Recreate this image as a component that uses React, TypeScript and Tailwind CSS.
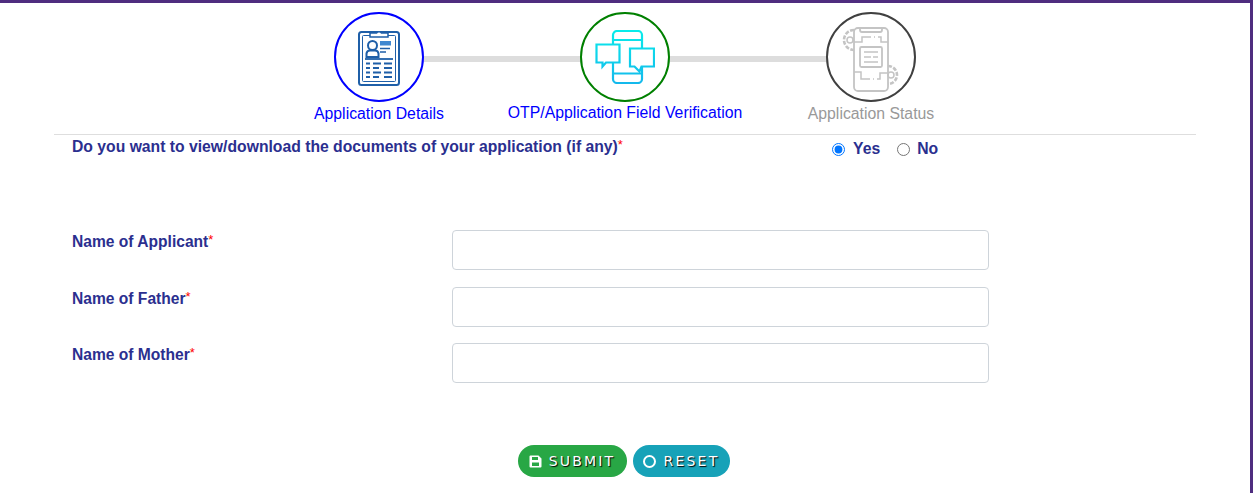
import React from "react";

function ClipboardIcon() {
  return (
    <svg width="42" height="58" viewBox="0 0 42 58" fill="none" stroke="#1f5fa8" strokeWidth="1.5" className="ml-[1px]">
      <rect x="1" y="4" width="40" height="53" rx="2.5" strokeWidth="2" />
      <rect x="4.500" y="7.500" width="33" height="46" rx="1" strokeWidth="1" />
      <path d="M12 9V5h6.500a3 3 0 0 1 5 0H30v4z" fill="#fff" strokeWidth="1.500" />
      <circle cx="14.500" cy="17.500" r="4.500" strokeWidth="2" />
      <path d="M8.500 29v-3.500a3.500 3.500 0 0 1 3.500-3h5a3.500 3.500 0 0 1 3.500 3V29z" strokeWidth="2" />
      <rect x="22" y="13" width="11" height="4.500" fill="#3f87d0" stroke="none" />
      <path d="M22 20.500h10M22 24h6" strokeWidth="1.500" />
      <path d="M7 31h28" strokeWidth="1.800" />
      <path d="M8 35.500h4M15 35.500h8M26 35.500h8M8 40h4M15 40h6M26 40h8M8 44.500h4M15 44.500h8M26 44.500h8M8 49h4M15 49h6M26 49h8" strokeWidth="2" />
    </svg>
  );
}

function ChatPhoneIcon() {
  return (
    <svg width="60" height="54" viewBox="0 0 60 54" fill="none" strokeWidth="2.200">
      <defs>
        <linearGradient id="chatgrad" gradientUnits="userSpaceOnUse" x1="0" y1="0" x2="0" y2="54">
          <stop offset="0" stopColor="#08ecea" />
          <stop offset="1" stopColor="#14b8ec" />
        </linearGradient>
      </defs>
      <g stroke="url(#chatgrad)">
        <rect x="18" y="1" width="29" height="52" rx="4" />
        <path d="M18 10h29M18 43.500h29" strokeWidth="1.800" />
        <path d="M1.500 14.500h23v18H11l-3.500 4v-4h-6z" fill="#fff" />
        <path d="M35 18.500h24v18H46.500l-2 5-5-5H35z" fill="#fff" />
      </g>
    </svg>
  );
}

function GearPhoneIcon() {
  return (
    <svg width="60" height="72" viewBox="0 0 60 72" fill="none" stroke="#c4c4c4" strokeWidth="1.800">
      <path d="M13 9 a8.500 8.500 0 1 0 0 20" strokeDasharray="4 1.500" strokeWidth="2.600" />
      <circle cx="9" cy="19" r="3" strokeWidth="1.500" />
      <rect x="13" y="7" width="34" height="63" rx="4" />
      <path d="M19 7v2a2 2 0 0 0 2 2h18a2 2 0 0 0 2-2V7" />
      <path d="M13 21h8v-5h9M33 16h1M37 16h3v5h7" strokeWidth="1.500" />
      <rect x="19" y="26" width="22" height="20" rx="1.500" fill="#fff" />
      <path d="M23 31h14M23 36h7M32 36h5M23 41h14" strokeWidth="1.600" />
      <path d="M13 51h7v7h9M32 58h1M36 58h3v-6h8" strokeWidth="1.500" />
      <path d="M47 45a9 9 0 1 1 0 18" strokeDasharray="4 1.500" strokeWidth="2.600" />
      <circle cx="50" cy="54" r="3" strokeWidth="1.500" />
    </svg>
  );
}

function Req() {
  return <span className="align-[3px] text-[13px] font-normal leading-none text-[#ff0000]">*</span>;
}

function Field({ label }: { label: string }) {
  return (
    <div className="flex h-10 items-start">
      <label className="w-[380px] pt-[3px] text-[15.600px] font-bold leading-[18px] text-[#2b2f8f]">
        {label}
        <Req />
      </label>
      <input
        type="text"
        className="h-10 w-[537px] rounded-[4px] border border-[#ced4da] bg-white"
      />
    </div>
  );
}

export default function App() {
  return (
    <div
      className="h-[493px] overflow-hidden border-t-[3px] border-r-[3px] border-[#4f2d7f] bg-white"
      style={{ fontFamily: '"Liberation Sans", Arial, sans-serif' }}
    >
      <div className="flex justify-center pt-[9px] pr-[3px] pl-[8px]">
        <div className="ml-[-6px] flex items-center">
          <div className="flex h-[90px] w-[90px] items-center justify-center rounded-full border-2 border-[#0000ff]">
            <ClipboardIcon />
          </div>
          <div className="mt-[4px] h-[6px] w-[156px] bg-[#dddddd]" />
          <div className="flex h-[90px] w-[90px] items-center justify-center rounded-full border-2 border-[#008000]">
            <ChatPhoneIcon />
          </div>
          <div className="mt-[4px] h-[6px] w-[156px] bg-[#dddddd]" />
          <div className="flex h-[90px] w-[90px] items-center justify-center rounded-full border-2 border-[#404040]">
            <GearPhoneIcon />
          </div>
        </div>
      </div>
      <div className="mt-[1px] flex justify-center pl-[8px] pr-[3px] text-[15.800px] leading-[20px]">
        <div className="ml-[-5px] grid grid-cols-[246px_246px_246px] text-center">
          <div className="pt-[1px] text-[#0000ff]">Application Details</div>
          <div className="text-[#0000ff]">OTP/Application Field Verification</div>
          <div className="pt-[1px] text-[#999999]">Application Status</div>
        </div>
      </div>
      <div className="mx-[54px] mt-[10px] border-t border-[#dedede]" />
      <div className="flex pl-[72px] pt-[2px]">
        <div className="w-[760px] text-[15.720px] font-bold leading-[20px] text-[#2b2f8f]">
          Do you want to view/download the documents of your application (if any)
          <Req />
        </div>
        <div className="flex items-center pt-[2px] text-[15.750px] font-bold leading-[20px] text-[#2b2f8f]">
          <label className="flex items-center">
            <input type="radio" name="docs" defaultChecked className="m-0 h-[13px] w-[13px] accent-[#0075ff]" />
            <span className="ml-[8px]">Yes</span>
          </label>
          <label className="ml-[17px] flex items-center">
            <input type="radio" name="docs" className="m-0 h-[13px] w-[13px]" />
            <span className="ml-[7px]">No</span>
          </label>
        </div>
      </div>
      <div className="mt-[71px] flex flex-col gap-[16.500px] pl-[72px]">
        <Field label="Name of Applicant" />
        <Field label="Name of Father" />
        <Field label="Name of Mother" />
      </div>
      <div
        className="mt-[62px] flex justify-center gap-[6px] pl-[8px] pr-[3px] text-[14px] tracking-[2.200px] text-white"
        style={{ fontFamily: '"DejaVu Sans", Verdana, sans-serif' }}
      >
        <button className="ml-[-8px] flex h-8 w-[109px] items-center justify-center gap-[7px] rounded-full bg-[#28a745] [text-shadow:1px_1px_1px_#000]">
          <svg width="13" height="13" viewBox="0 0 13 13" fill="#fff">
            <path d="M0.500 1.500a1 1 0 0 1 1-1h8l3 3v8a1 1 0 0 1-1 1h-10a1 1 0 0 1-1-1zM3 2v3h6V2zM3 7.500v3.500h7V7.500z" fillRule="evenodd" />
          </svg>
          SUBMIT
        </button>
        <button className="flex h-8 w-[97px] items-center justify-center gap-[8px] rounded-full bg-[#17a2b8] [text-shadow:1px_1px_1px_#000]">
          <span className="h-[13px] w-[13px] rounded-full border-[2.500px] border-white" />
          RESET
        </button>
      </div>
    </div>
  );
}
